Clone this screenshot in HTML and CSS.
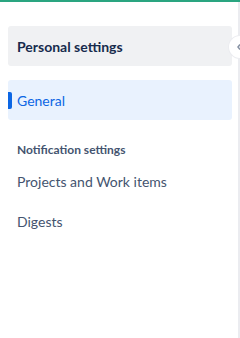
FILE: index.html
```html
<!DOCTYPE html>
<html lang="en">
  <head>
    <meta charset="UTF-8" />
    <title>Personal settings</title>
    <link rel="stylesheet" href="styles.css">
  </head>
  <body>
    <div class="topbar"></div>
    <aside class="sidebar">
      <div class="sidebar-head">
        <h2>Personal settings</h2>
      </div>
      <button class="collapse" aria-label="Collapse sidebar">
        <svg width="3" height="6" viewBox="0 0 3 6"><path d="M3 0.5 L1 3 L3 5.5" fill="none" stroke="#8590a2" stroke-width="1.5"/></svg>
      </button>
      <nav class="nav">
        <a href="#" class="nav-item active">General</a>
        <h3 class="nav-group">Notification settings</h3>
        <a href="#" class="nav-item">Projects and Work items</a>
        <a href="#" class="nav-item">Digests</a>
      </nav>
    </aside>
  </body>
</html>
```

FILE: styles.css
```css
* {
  margin: 0;
  padding: 0;
  box-sizing: border-box;
}

body {
  font-family: Lato, "Noto Sans", sans-serif;
  background-color: #fff;
  color: #44546f;
  height: 100vh;
  overflow: hidden;
}

.topbar {
  height: 2px;
  background-color: #2aa580;
}

.sidebar {
  position: relative;
  height: calc(100vh - 2px);
  border-right: 2px solid #ebecf0;
  padding: 24px 6px 0 8px;
}

.sidebar-head {
  background-color: #f0f1f3;
  border-radius: 3px;
  height: 40px;
  display: flex;
  align-items: center;
  padding-left: 9px;
}

.sidebar-head h2 {
  font-size: 14px;
  font-weight: 700;
  color: #172b4d;
}

.collapse {
  position: absolute;
  top: 33px;
  left: 228px;
  width: 12px;
  height: 24px;
  border-radius: 12px 0 0 12px;
  border: 1px solid #ebecf0;
  border-right: none;
  background-color: #fff;
  display: flex;
  align-items: center;
  justify-content: flex-end;
}

.nav {
  margin-top: 14px;
  display: flex;
  flex-direction: column;
}

.nav-item {
  position: relative;
  display: flex;
  align-items: center;
  height: 40px;
  padding-left: 9px;
  font-size: 14px;
  color: #44546f;
  text-decoration: none;
  border-radius: 3px;
}

.nav-item.active {
  background-color: #e9f2fe;
  color: #0c66e4;
}

.nav-item.active::before {
  content: "";
  position: absolute;
  left: 0;
  top: 12px;
  width: 4px;
  height: 17px;
  background-color: #0c66e4;
  border-radius: 0 2px 2px 0;
}

.nav-group {
  font-size: 12px;
  font-weight: 700;
  color: #44546f;
  padding: 22px 0 4px 9px;
}
```
